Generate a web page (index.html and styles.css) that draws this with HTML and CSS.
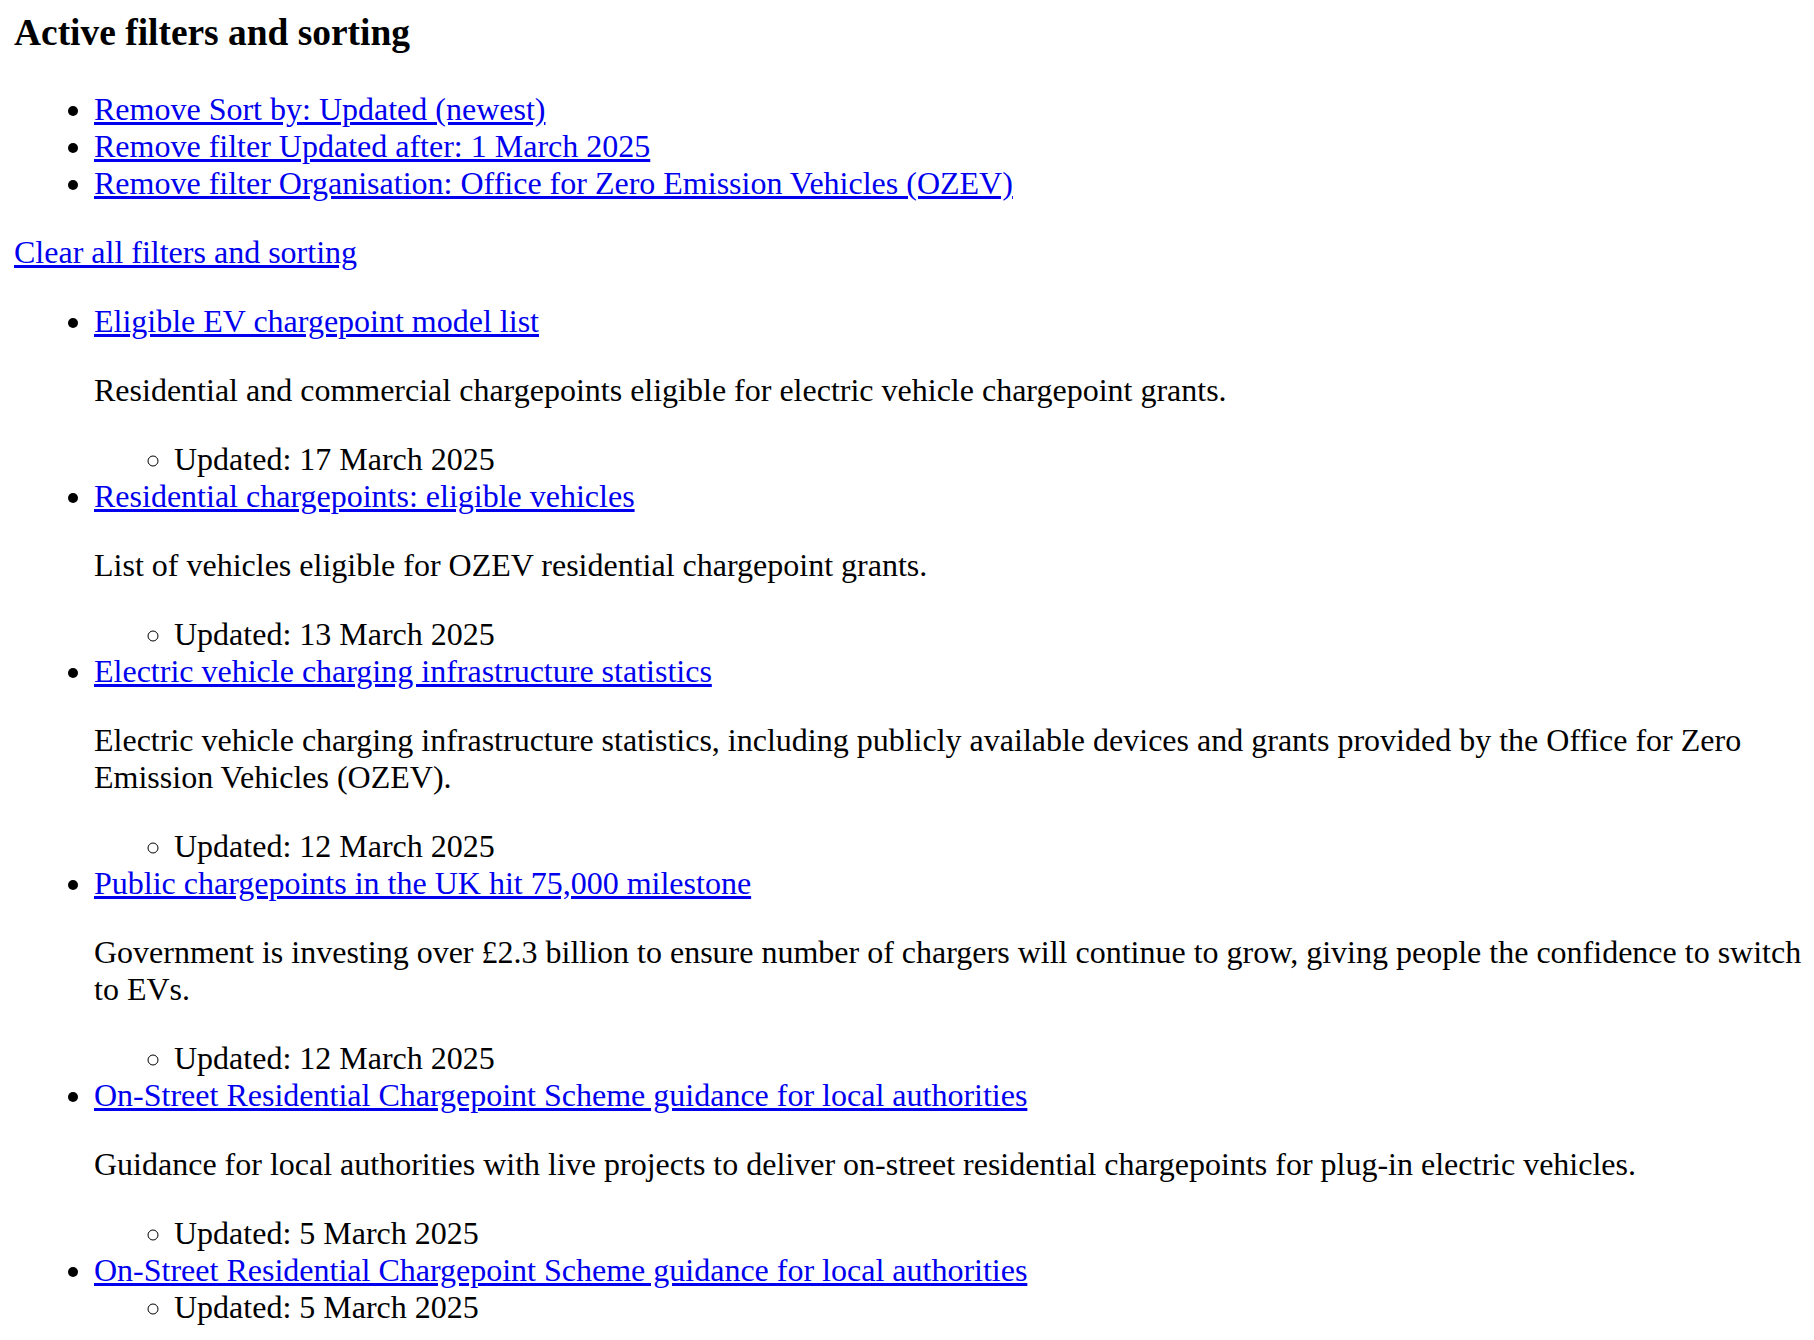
FILE: index.html
```html
<!DOCTYPE html>
<html lang="en">
<head>
<meta charset="utf-8">
<title>Search results</title>
<link rel="stylesheet" href="styles.css">
</head>
<body>
<h3 class="filters-title">Active filters and sorting</h3>
<ul class="list">
  <li><a href="#">Remove Sort by: Updated (newest)</a></li>
  <li><a href="#">Remove filter Updated after: 1 March 2025</a></li>
  <li><a href="#">Remove filter Organisation: Office for Zero Emission Vehicles (OZEV)</a></li>
</ul>
<p class="para"><a href="#">Clear all filters and sorting</a></p>
<ul class="list">
  <li>
    <a href="#">Eligible EV chargepoint model list</a>
    <p class="para">Residential and commercial chargepoints eligible for electric vehicle chargepoint grants.</p>
    <ul class="meta"><li>Updated: 17 March 2025</li></ul>
  </li>
  <li>
    <a href="#">Residential chargepoints: eligible vehicles</a>
    <p class="para">List of vehicles eligible for OZEV residential chargepoint grants.</p>
    <ul class="meta"><li>Updated: 13 March 2025</li></ul>
  </li>
  <li>
    <a href="#">Electric vehicle charging infrastructure statistics</a>
    <p class="para">Electric vehicle charging infrastructure statistics, including publicly available devices and grants provided by the Office for Zero Emission Vehicles (OZEV).</p>
    <ul class="meta"><li>Updated: 12 March 2025</li></ul>
  </li>
  <li>
    <a href="#">Public chargepoints in the UK hit 75,000 milestone</a>
    <p class="para">Government is investing over £2.3 billion to ensure number of chargers will continue to grow, giving people the confidence to switch to EVs.</p>
    <ul class="meta"><li>Updated: 12 March 2025</li></ul>
  </li>
  <li>
    <a href="#">On-Street Residential Chargepoint Scheme guidance for local authorities</a>
    <p class="para">Guidance for local authorities with live projects to deliver on-street residential chargepoints for plug-in electric vehicles.</p>
    <ul class="meta"><li>Updated: 5 March 2025</li></ul>
  </li>
  <li>
    <a href="#">On-Street Residential Chargepoint Scheme guidance for local authorities</a>
    <ul class="meta"><li>Updated: 5 March 2025</li></ul>
  </li>
</ul>
</body>
</html>
```

FILE: styles.css
```css
html {
  background: #ffffff;
}

body {
  margin: 11px 0 16px 14px;
  font-family: "Liberation Serif", "Times New Roman", serif;
  font-size: 32px;
  color: #000000;
}

.filters-title {
  font-size: 1.17em;
  font-weight: bold;
  margin: 0 0 1em;
}

.list {
  margin: 1em 0;
  padding-left: 80px;
  list-style-type: disc;
}

.meta {
  margin: 0;
  padding-left: 80px;
  list-style-type: circle;
}

.para {
  margin: 1em 0;
}

a {
  color: #0000ee;
  text-decoration: underline;
}
```
